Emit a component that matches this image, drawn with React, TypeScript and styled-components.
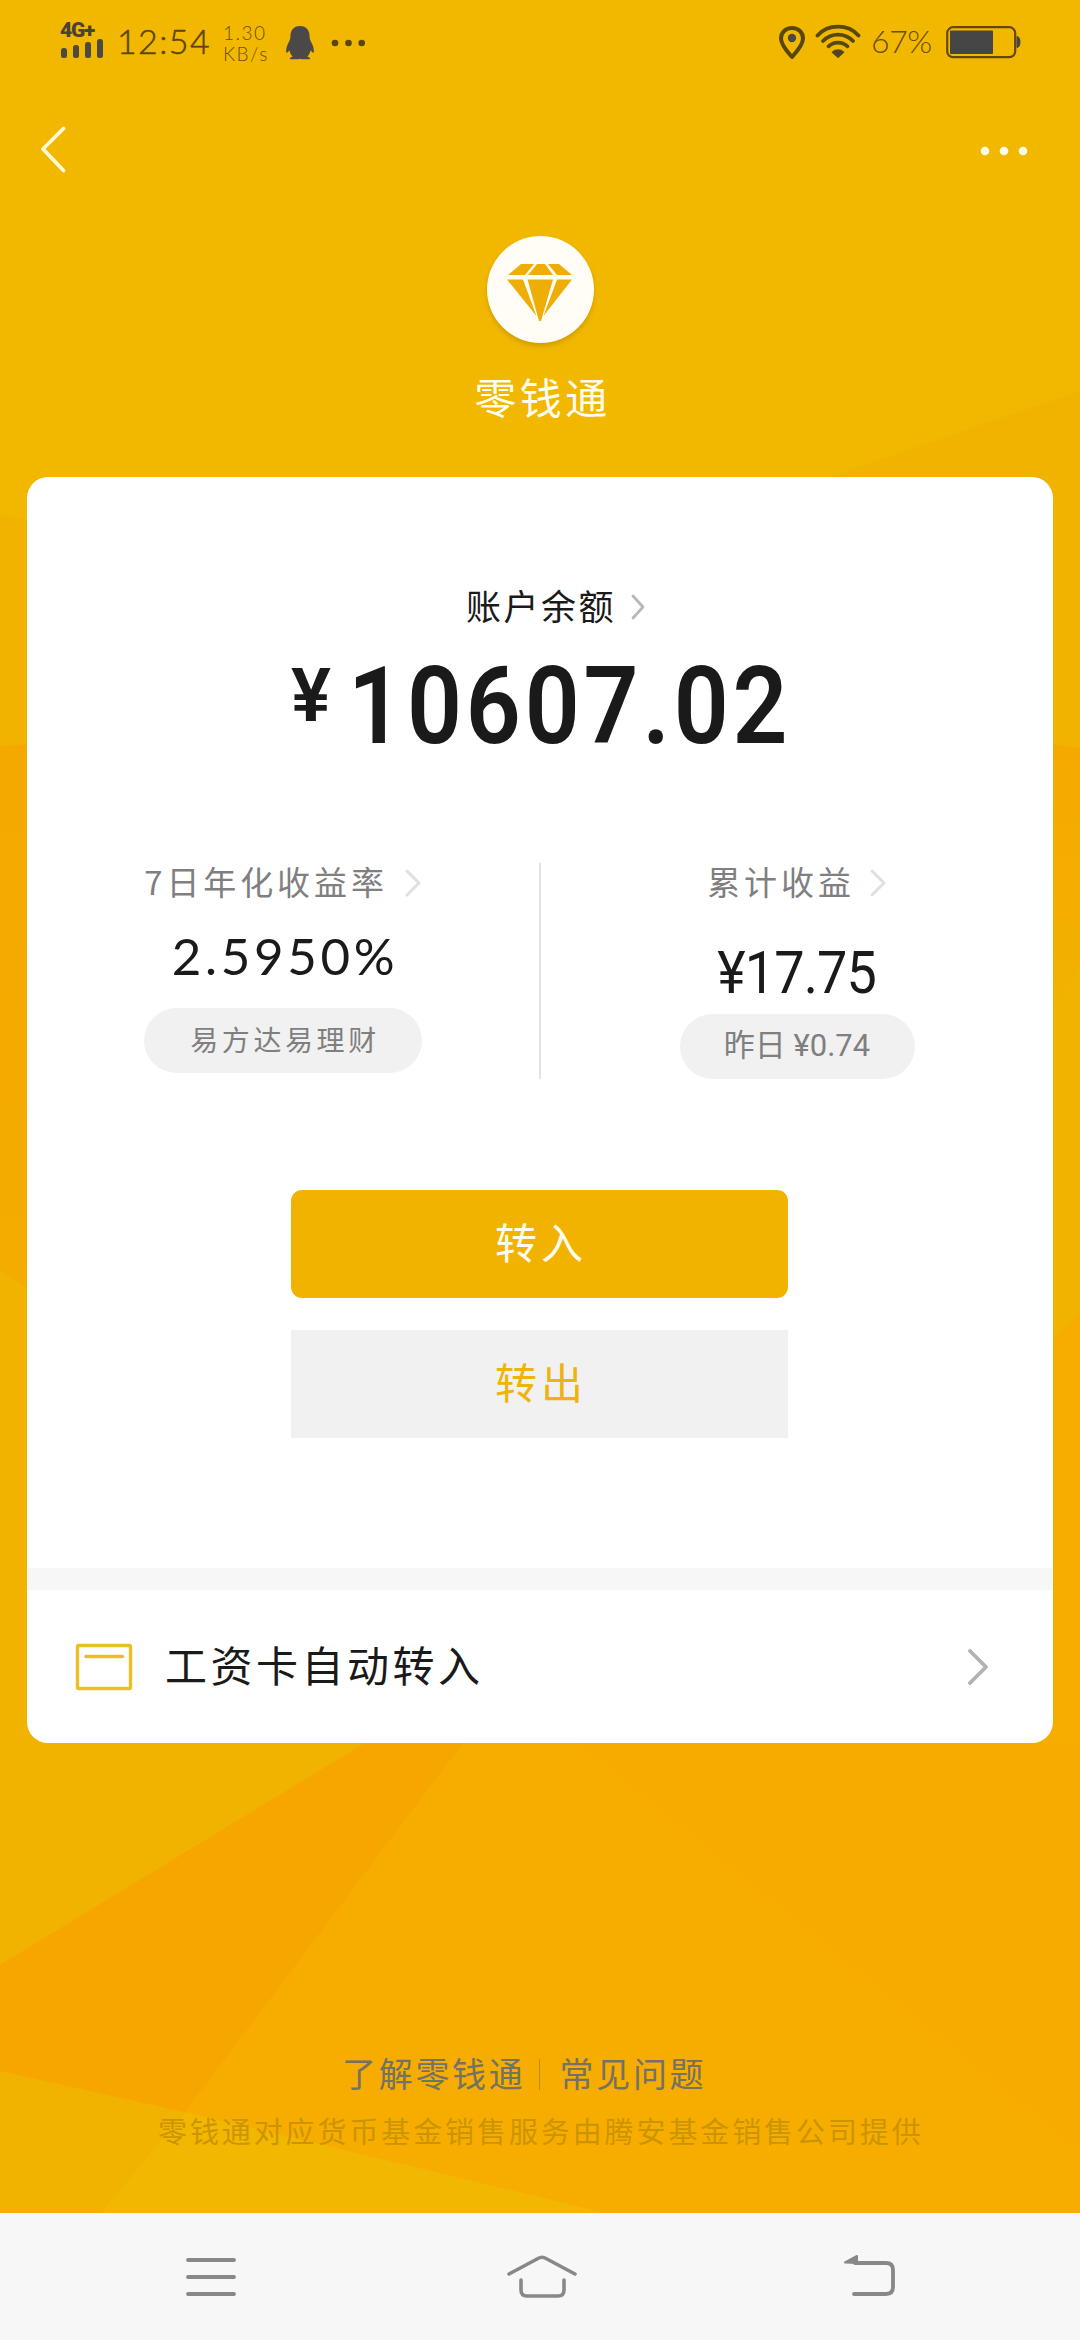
import React from "react";
import styled, { createGlobalStyle } from "styled-components";

const CJK = `"Noto Sans CJK SC", sans-serif`;
const DIGITS = `Roboto, "Noto Sans CJK SC", sans-serif`;
const INK = "#1a1a1a";
const GOLD = "#f2b200";

const GlobalStyle = createGlobalStyle`
  body { margin: 0; background: #f2b700; }
  * { box-sizing: border-box; }
  button { border: 0; padding: 0; background: none; font: inherit; }
`;

const Screen = styled.div`
  position: relative;
  isolation: isolate;
  width: 1080px;
  height: 2340px;
  display: flex;
  flex-direction: column;
  overflow: hidden;
  font-family: ${CJK};
  color: ${INK};
  white-space: nowrap;
`;

const Backdrop = styled.svg`
  position: absolute;
  inset: 0;
  z-index: -1;
`;

const StatusBar = styled.header`
  height: 85px;
  display: flex;
  justify-content: space-between;
  padding: 0 58px 0 60px;
  color: #4a4238;
`;

const StatusGroup = styled.div`
  display: flex;
  align-items: flex-start;
`;

const Network = styled.div`
  width: 57px;
  padding-top: 20px;
  font: 900 21px/20px Roboto, sans-serif;
  letter-spacing: -1.2px;
`;

const Bars = styled.div`
  display: flex;
  align-items: flex-end;
  gap: 6px;
  height: 18px;
  margin-left: 1px;
`;

const Bar = styled.i<{ $h: number }>`
  width: 6px;
  height: ${(p) => p.$h}px;
  border-radius: 2.5px;
  background: #4c4940;
`;

const Clock = styled.div`
  width: 106px;
  padding-top: 21px;
  font: 300 34px/40px Lato, sans-serif;
  letter-spacing: 1.4px;
  color: #5c450c;
  -webkit-text-stroke: 0.5px #5c450c;
`;

const Speed = styled.div`
  width: 63px;
  padding-top: 22px;
  display: flex;
  flex-direction: column;
  font: 300 19px/21px Lato, sans-serif;
  letter-spacing: 1.5px;
  color: #6a5010;
`;

const Glyph = styled.svg<{ $top: number; $left?: number }>`
  display: block;
  flex: none;
  margin-top: ${(p) => p.$top}px;
  margin-left: ${(p) => p.$left ?? 0}px;
`;

const Percent = styled.div`
  width: 74px;
  padding: 21px 0 0 10px;
  font: 300 32px/40px Lato, sans-serif;
  letter-spacing: -0.4px;
  color: #6a4d08;
`;

const TitleBar = styled.nav`
  height: 130px;
  display: flex;
  justify-content: space-between;
  padding: 0 51px 0 39px;
`;

const Brand = styled.section`
  height: 262px;
  display: flex;
  flex-direction: column;
  align-items: center;
  padding-top: 21px;
`;

const Badge = styled.div`
  width: 107px;
  height: 107px;
  border-radius: 50%;
  background: #fffdf5;
  box-shadow: 0 3px 5px rgba(150, 105, 0, 0.35);
  display: flex;
  justify-content: center;
  padding-top: 28px;
`;

const BrandName = styled.h1`
  margin: 23px 0 0 5px;
  font-size: 42px;
  font-weight: 400;
  line-height: 60px;
  letter-spacing: 3.5px;
  color: #fffdf2;
`;

const Card = styled.main`
  width: 1026px;
  height: 1266px;
  margin: 0 27px;
  border-radius: 21px;
  background: #fff;
  display: flex;
  flex-direction: column;
`;

const BalanceLabel = styled.div`
  margin-top: 103px;
  padding-left: 439px;
  height: 51px;
  display: flex;
  font-size: 35px;
  line-height: 50px;
  letter-spacing: 2.5px;
`;

const Balance = styled.div`
  display: flex;
  height: 110px;
  margin: 12px 0 0 264px;
  font-family: ${DIGITS};
  font-weight: 600;
`;

const Currency = styled.span`
  width: 57px;
  font-size: 75px;
  line-height: 104px;
`;

const Amount = styled.span`
  font-size: 107px;
  line-height: 127px;
  letter-spacing: 4.3px;
  transform: scaleX(0.9);
  transform-origin: left;
`;

const Stats = styled.section`
  height: 216px;
  margin-top: 110px;
  display: grid;
  grid-template-columns: 1fr 2px 1fr;
`;

const Divider = styled.i`
  background: #e3e3e3;
`;

const Stat = styled.div`
  display: flex;
  flex-direction: column;
  align-items: center;
`;

const StatLabel = styled.div`
  height: 40px;
  display: flex;
  font-size: 33px;
  line-height: 37px;
  letter-spacing: 3.9px;
  color: #7f7f7f;
`;

const Rate = styled.div`
  height: 60px;
  margin: 23px 0 22px 4px;
  font: 400 51px/60px Lato, sans-serif;
  letter-spacing: 3.7px;
`;

const Earned = styled.div`
  height: 60px;
  margin: 40px 0 11px;
  font: 400 59px/60px ${DIGITS};
  letter-spacing: -1px;
  transform: scaleX(0.915);
`;

const Pill = styled.div<{ $w: number }>`
  width: ${(p) => p.$w}px;
  height: 65px;
  border-radius: 33px;
  background: #f1f1f1;
  display: flex;
  justify-content: center;
  font-family: ${DIGITS};
  font-size: 31px;
  line-height: 64px;
  color: #7f7f7f;
`;

const FundName = styled.span`
  margin-left: 4px;
  font-family: ${CJK};
  font-size: 28px;
  line-height: 62px;
  letter-spacing: 3.6px;
`;

const Actions = styled.div`
  width: 497px;
  margin: 111px 0 0 264px;
  display: flex;
  flex-direction: column;
  gap: 32px;
`;

const Action = styled.button<{ $primary?: boolean }>`
  height: 108px;
  padding: 0 0 7px 3px;
  border-radius: ${(p) => (p.$primary ? 11 : 0)}px;
  background: ${(p) => (p.$primary ? GOLD : "#f1f1f1")};
  color: ${(p) => (p.$primary ? "#fffdf0" : "#f0b20c")};
  font-size: 42px;
  line-height: 100px;
  letter-spacing: 4px;
`;

const Band = styled.i`
  height: 22px;
  margin-top: 130px;
  background: #f7f7f7;
`;

const SalaryRow = styled.div`
  flex: 1;
  display: flex;
  align-items: center;
  padding: 0 64px 0 48px;
`;

const SalaryText = styled.span`
  flex: 1;
  margin-left: 32px;
  padding-bottom: 6px;
  font-size: 42px;
  line-height: 60px;
  letter-spacing: 3.5px;
`;

const Footer = styled.footer`
  height: 470px;
  padding-top: 305px;
  display: flex;
  flex-direction: column;
`;

const Links = styled.div`
  display: flex;
  align-items: center;
  height: 50px;
  padding-left: 342px;
  font-size: 34px;
  line-height: 50px;
  letter-spacing: 2.7px;
  color: #747263;
`;

const LinkBar = styled.i`
  width: 1px;
  height: 31px;
  margin: 3px 20px 0 13px;
  background: #bd8c1c;
`;

const Legal = styled.p`
  margin: 9px 0 0 158px;
  font-size: 29px;
  line-height: 46px;
  letter-spacing: 2.9px;
  color: #cc9500;
`;

const SystemNav = styled.nav`
  height: 127px;
  background: #f7f7f7;
  display: flex;
  justify-content: space-between;
  padding: 39px 183px 0 184px;
`;

function Chevron({ w, h, color, sw, top, left }: { w: number; h: number; color: string; sw: number; top: number; left: number }) {
  return (
    <Glyph $top={top} $left={left} width={w + 4} height={h + 4} fill="none" stroke={color} strokeWidth={sw} strokeLinecap="round" strokeLinejoin="round">
      <path d={`M2 2 L${w + 1} ${h / 2 + 2} L2 ${h + 2}`} />
    </Glyph>
  );
}

export default function App() {
  return (
    <Screen>
      <GlobalStyle />
      <Backdrop width="1080" height="2340" viewBox="0 0 1080 2340">
        <defs>
          <linearGradient id="leftEdge" x1="0" y1="0" x2="0" y2="1">
            <stop offset="0" stopColor="#f4a900" />
            <stop offset="1" stopColor="#f4ac00" />
          </linearGradient>
          <linearGradient id="rightEdge" x1="0" y1="0" x2="0" y2="1">
            <stop offset="0" stopColor="#f5a900" />
            <stop offset="1" stopColor="#f2b200" />
          </linearGradient>
        </defs>
        <rect width="1080" height="2340" fill="#f2b800" />
        <path d="M0 515 L60 524 L820 480 L1080 391 V2340 H0Z" fill="#f2b200" />
        <path d="M0 746 L60 742 V1310 L0 1270Z" fill="url(#leftEdge)" />
        <path d="M1040 742 L1080 748 V965 L1040 1040Z" fill="url(#rightEdge)" />
        <path d="M1080 1315 L1040 1345 V1743 H365 L0 1965 V2071 L185 2112 L610 2214 H1080Z" fill="#f7ad00" />
        <path d="M365 1743 L0 1965 V2071 L185 2112 L463 1743Z" fill="#f7a600" />
        <path d="M580 1743 L1080 2150 V1743Z" fill="#f7aa00" />
        <path d="M185 2112 L610 2214 H100Z" fill="#f2b700" />
      </Backdrop>

      <StatusBar>
        <StatusGroup>
          <Network>
            4G+
            <Bars>
              <Bar $h={10} />
              <Bar $h={13} />
              <Bar $h={16} />
              <Bar $h={19} />
            </Bars>
          </Network>
          <Clock>12:54</Clock>
          <Speed>
            <span>1.30</span>
            <span>KB/s</span>
          </Speed>
          <Glyph $top={26} width="28" height="34" viewBox="0 0 28 34" fill="#4b4848">
            <path d="M14 0C7.500 0 4.500 4.500 4.400 10.500C4.400 12.500 4 14 2.600 16.500C.6 20-.2 24 .3 26.500C1 27.500 2.600 25.500 3.400 24.300C4 27 5 29 6.700 30.800C4.500 31.300 3.600 32.300 4.200 33.300H12.500L14 32.800L15.500 33.300H23.800C24.400 32.300 23.500 31.300 21.300 30.800C23 29 24 27 24.600 24.300C25.400 25.500 27 27.500 27.700 26.500C28.200 24 27.400 20 25.400 16.500C24 14 23.600 12.500 23.600 10.500C23.500 4.500 20.500 0 14 0Z" />
          </Glyph>
          <Glyph $top={39} $left={17} width="36" height="8" fill="#57470f">
            <circle cx="4" cy="4" r="3.300" />
            <circle cx="17.500" cy="4" r="3.300" />
            <circle cx="30.700" cy="4" r="3.300" />
          </Glyph>
        </StatusGroup>
        <StatusGroup>
          <Glyph $top={26} width="26" height="34" viewBox="0 0 26 34" fill="none">
            <path d="M13 2C6.500 2 2 6.600 2 12.500C2 19 8.500 26 13 31C17.500 26 24 19 24 12.500C24 6.600 19.500 2 13 2Z" stroke="#57470f" strokeWidth="4" strokeLinejoin="round" />
            <circle cx="13" cy="12" r="4.200" fill="#4b4848" />
          </Glyph>
          <Glyph $top={24} $left={10} width="46" height="35" viewBox="0 0 46 35" fill="none" stroke="#554812" strokeWidth="3.800" strokeLinecap="round">
            <path d="M2.500 11.500C13-.3 33-.3 43.500 11.500" />
            <path d="M8 17C16.500 8.500 29.500 8.500 38 17" />
            <path d="M13.500 22.300C19 17.300 27 17.300 32.500 22.300" />
            <path d="M17.500 28.300C20.500 25.300 25.500 25.300 28.500 28.300L23 33.200Z" fill="#4b4530" strokeWidth="1.500" strokeLinejoin="round" />
          </Glyph>
          <Percent>67%</Percent>
          <Glyph $top={26} $left={11} width="76" height="33">
            <rect x="1.200" y="1.200" width="68" height="30" rx="6" fill="none" stroke="#664608" strokeWidth="2.200" />
            <rect x="4" y="4.500" width="43" height="23.500" rx="1" fill="#474646" />
            <path d="M71 10.500C75 10.500 75 21.500 71 21.500Z" fill="#474646" stroke="#474646" />
          </Glyph>
        </StatusGroup>
      </StatusBar>

      <TitleBar>
        <Glyph $top={40} width="28" height="50" fill="none" stroke="#fffbd8" strokeWidth="3.800" strokeLinecap="round" strokeLinejoin="round">
          <path d="M24.500 3.500 L4 24 L24.500 45.500" />
        </Glyph>
        <Glyph $top={60} width="50" height="12" fill="#fffce8">
          <circle cx="6" cy="6" r="4.300" />
          <circle cx="25" cy="6" r="4.300" />
          <circle cx="44" cy="6" r="4.300" />
        </Glyph>
      </TitleBar>

      <Brand>
        <Badge>
          <svg width="66" height="58" viewBox="0 0 66 58" fill="#efad08">
            <path d="M14 0H27L18 11H1Z" />
            <path d="M30 0H38L46 11H21Z" />
            <path d="M41 0H52L65 11H50Z" />
            <path d="M0 15.500H16L29.500 52Z" />
            <path d="M20.500 15.500H46L34 57H32Z" />
            <path d="M50 15.500H65L36.500 52Z" />
          </svg>
        </Badge>
        <BrandName>零钱通</BrandName>
      </Brand>

      <Card>
        <BalanceLabel>
          账户余额
          <Chevron w={11} h={22} color="#b8b8b8" sw={2.8} top={14} left={15} />
        </BalanceLabel>
        <Balance>
          <Currency>¥</Currency>
          <Amount>10607.02</Amount>
        </Balance>

        <Stats>
          <Stat>
            <StatLabel>
              7日年化收益率
              <Chevron w={13} h={24} color="#e0e0e0" sw={3} top={6} left={17} />
            </StatLabel>
            <Rate>2.5950%</Rate>
            <Pill $w={278}>
              <FundName>易方达易理财</FundName>
            </Pill>
          </Stat>
          <Divider />
          <Stat>
            <StatLabel>
              累计收益
              <Chevron w={13} h={24} color="#e0e0e0" sw={3} top={6} left={15} />
            </StatLabel>
            <Earned>¥17.75</Earned>
            <Pill $w={235}>昨日 ¥0.74</Pill>
          </Stat>
        </Stats>

        <Actions>
          <Action $primary>转入</Action>
          <Action>转出</Action>
        </Actions>

        <Band />
        <SalaryRow>
          <svg width="58" height="48" viewBox="0 0 58 48" fill="none" stroke="#e8bf25" strokeWidth="3.400" strokeLinecap="round">
            <rect x="2.500" y="2.500" width="53" height="43" rx="1.500" />
            <path d="M11 13.500H47.500" />
          </svg>
          <SalaryText>工资卡自动转入</SalaryText>
          <Chevron w={17} h={32} color="#b2b2b2" sw={3.8} top={0} left={0} />
        </SalaryRow>
      </Card>

      <Footer>
        <Links>
          <span>了解零钱通</span>
          <LinkBar />
          <span>常见问题</span>
        </Links>
        <Legal>零钱通对应货币基金销售服务由腾安基金销售公司提供</Legal>
      </Footer>

      <SystemNav>
        <Glyph $top={0} width="54" height="50" fill="none" stroke="#888" strokeWidth="3.800" strokeLinecap="round">
          <path d="M4 8H50M4 25H50M4 42H50" />
        </Glyph>
        <Glyph $top={0} $left={5} width="74" height="50" fill="none" stroke="#888" strokeWidth="3.600" strokeLinecap="round" strokeLinejoin="round">
          <path d="M4 22L33 6.500Q37 4 41 6.500L70 22" />
          <path d="M16 28V38Q16 44 22 44H53Q59 44 59 38V28" />
        </Glyph>
        <Glyph $top={0} width="56" height="50" fill="none" stroke="#888" strokeWidth="3.800" strokeLinecap="round" strokeLinejoin="round">
          <path d="M14 11H45Q52 11 52 18V35Q52 42 45 42H13" />
          <path d="M4 10.500L16 4V11Z" fill="#888" strokeWidth="2" />
        </Glyph>
      </SystemNav>
    </Screen>
  );
}
